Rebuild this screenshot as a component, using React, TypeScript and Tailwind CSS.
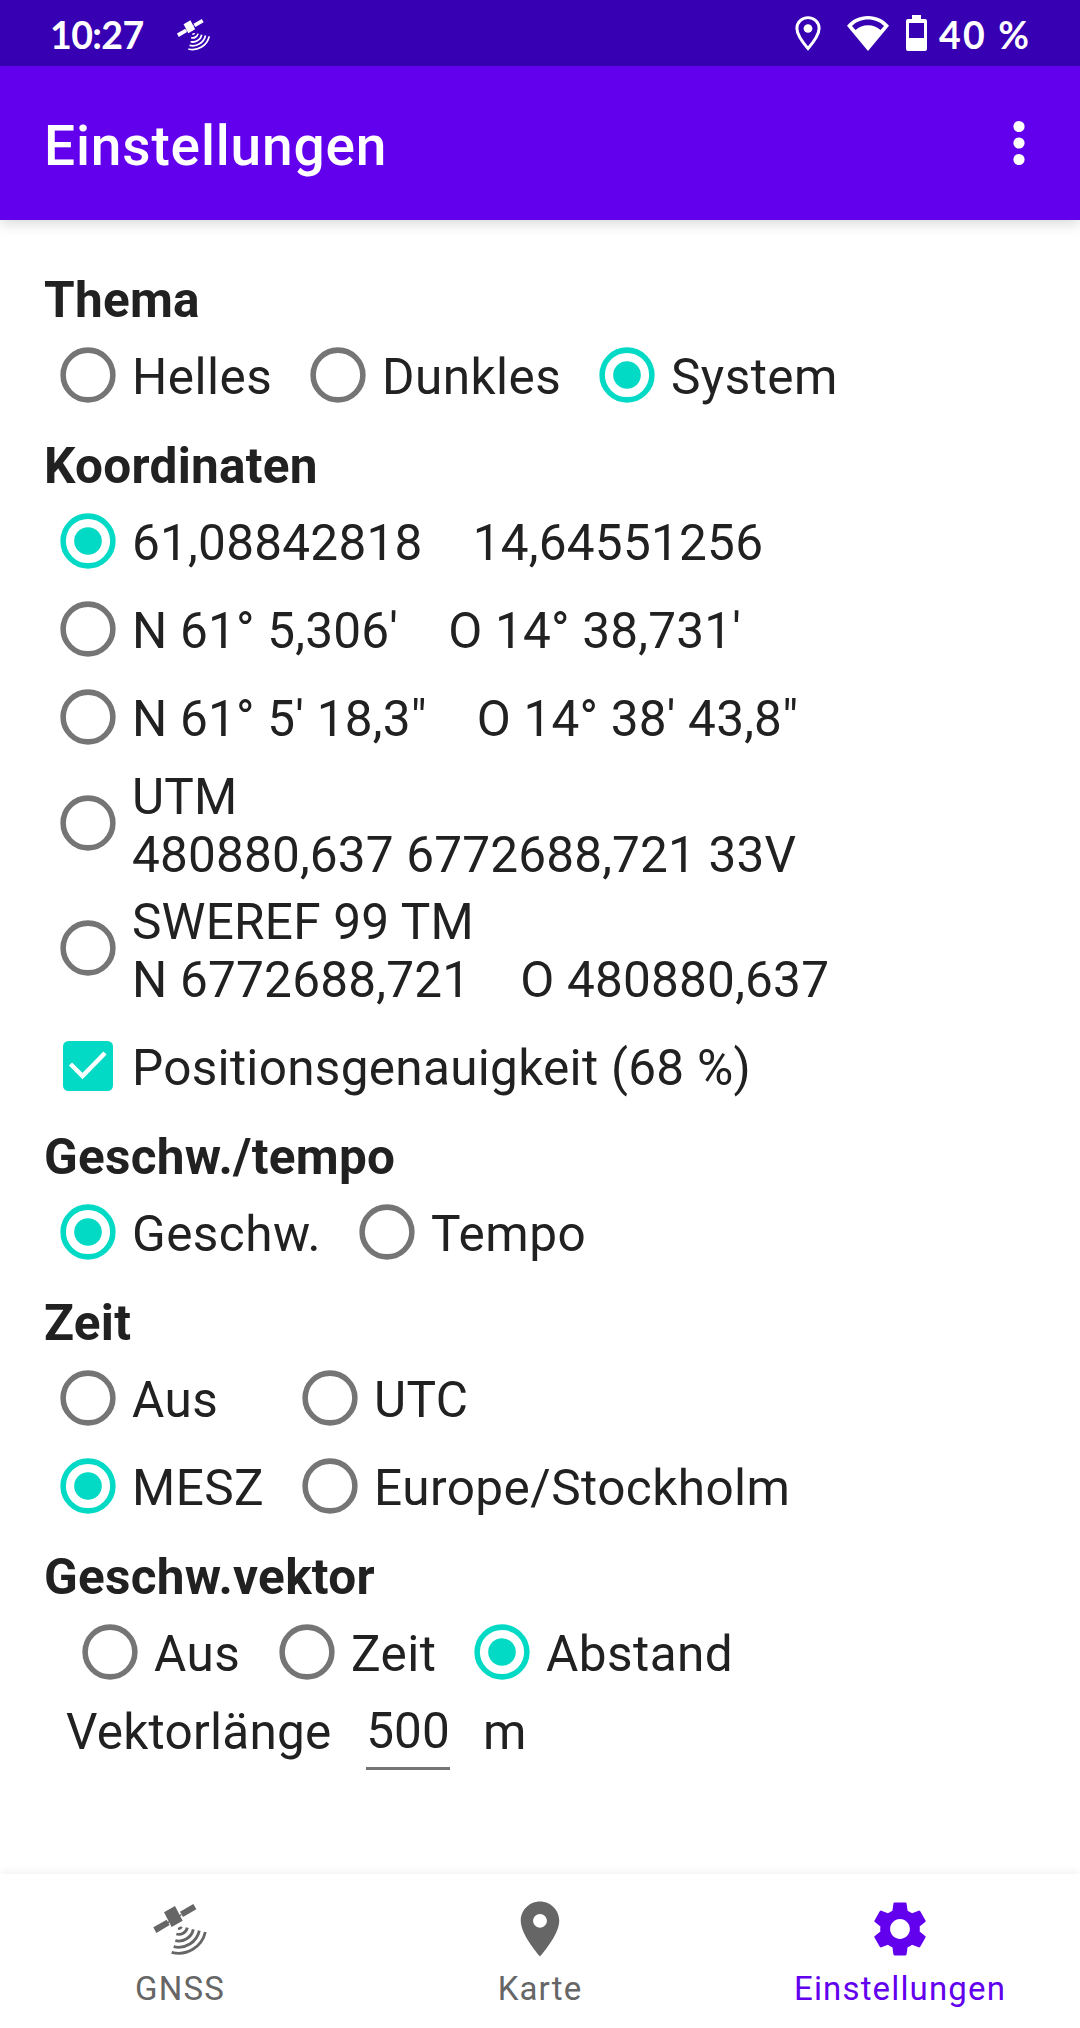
import type { ReactNode } from "react";

function Satellite({ className }: { className: string }) {
  return (
    <svg viewBox="81 48 198 198" className={className} fill="currentColor">
      <path d="M132 97 165 78 188 122 155 141Z" />
      <path d="M100 142 140 119 149 135 109 159Z" />
      <path d="M180 95 220 72 229 88 189 111Z" />
      <path d="M138 131 184 104" stroke="currentColor" strokeWidth="4" />
      <path d="M173 145Q180 136 188 141 186 149 175 150Z" />
      <g fill="none" stroke="currentColor" strokeWidth="8.5">
        <path d="M169 162A26 26 0 0 0 202 143" />
        <path d="M166 182A45 45 0 0 0 220 148" />
        <path d="M161 200A63.5 63.5 0 0 0 238 152" />
        <path d="M155 217A82 82 0 0 0 256 156" />
      </g>
    </svg>
  );
}

function Radio({
  label,
  checked = false,
  className = "",
  box = "h-[88px]",
  spacing = "tracking-[0.45px]",
}: {
  label: ReactNode;
  checked?: boolean;
  className?: string;
  box?: string;
  spacing?: string;
}) {
  return (
    <div role="radio" aria-checked={checked} className={`flex shrink-0 items-center ${box} ${className}`}>
      <span className="flex w-[88px] shrink-0 justify-center pt-px">
        <svg
          viewBox="-0.13 -0.13 20.26 20.26"
          className={`size-[56px] ${checked ? "text-[#03dac5]" : "text-[#757575]"}`}
        >
          <circle cx="10" cy="10" r="9" fill="none" stroke="currentColor" strokeWidth="2" />
          {checked && <circle cx="10" cy="10" r="5" fill="currentColor" />}
        </svg>
      </span>
      <span className={`mt-[6px] whitespace-pre ${spacing}`}>{label}</span>
    </div>
  );
}

function Heading({ children }: { children: string }) {
  return (
    <h2 className="mt-[19px] h-[59px] pl-[44px] font-bold leading-[58px] tracking-[0.28px]">{children}</h2>
  );
}

function NavItem({ label, icon, active = false }: { label: string; icon: ReactNode; active?: boolean }) {
  return (
    <div
      className={`flex flex-1 flex-col items-center pt-[22px] ${active ? "text-[#6200ee]" : "text-[#666666]"}`}
    >
      {icon}
      <span className="mt-[7px] text-[33px] leading-[39px] tracking-[1.15px]">{label}</span>
    </div>
  );
}

export default function App() {
  return (
    <div className="flex h-[2028px] w-[1080px] flex-col overflow-hidden bg-white font-['Roboto',sans-serif] text-[49.5px] leading-[58px] text-[#212121]">
      <div className="flex h-[66px] shrink-0 items-center bg-[#3700b3] pr-[48px] pl-[50px] font-['Lato',sans-serif] text-[37.5px] leading-[66px] font-bold text-white">
        <span className="mt-[4px] w-[123px] tracking-[-0.6px]">10:27</span>
        <Satellite className="mt-[2px] size-[41px]" />
        <div className="ml-auto flex items-center">
          <svg viewBox="0 0 26 36" className="h-[35px] w-[26px]" preserveAspectRatio="none">
            <path
              d="M13 1.7C6.7 1.7 1.9 6.6 1.9 12.8 1.9 19.8 8 27.4 13 33.5 18 27.4 24.1 19.8 24.1 12.8 24.1 6.6 19.3 1.7 13 1.7Z"
              fill="none"
              stroke="white"
              strokeWidth="3"
            />
            <circle cx="13" cy="12.8" r="4.4" fill="white" />
          </svg>
          <svg
            viewBox="0 0 42 36"
            className="ml-[26px] h-[35px] w-[42px]"
            preserveAspectRatio="none"
            fill="white"
          >
            <path
              fillRule="evenodd"
              d="M0 10C5.5 3.5 12.5 0 21 0S36.500 3.500 42 10L21 36ZM5 10.200 8.500 14.500C12 11.200 16 9.400 21 9.400S30 11.200 33.500 14.500L37 10.200C32.500 6 27.500 3.700 21 3.700S9.500 6 5 10.200Z"
            />
          </svg>
          <svg viewBox="0 0 21 36" className="ml-[17px] h-[36px] w-[21px]" fill="white">
            <path
              fillRule="evenodd"
              d="M6 0H15V4H19Q21 4 21 6V34Q21 36 19 36H2Q0 36 0 34V6Q0 4 2 4H6ZM3 8V23H18V8Z"
            />
          </svg>
          <span className="mt-[4px] ml-[12px] w-[93px] whitespace-pre tracking-[2.2px]">40 %</span>
        </div>
      </div>

      <header className="relative z-10 flex h-[154px] shrink-0 items-center justify-between bg-[#6200ee] pr-[55px] pl-[44px] text-white shadow-[0_4px_12px_rgba(0,0,0,0.15)]">
        <h1 className="mt-[6px] text-[55px] font-medium leading-[64px] tracking-[0.85px]">Einstellungen</h1>
        <svg viewBox="0 0 12 46" className="h-[46px] w-[12px]" fill="white">
          <circle cx="6" cy="6.5" r="5.6" />
          <circle cx="6" cy="23" r="5.6" />
          <circle cx="6" cy="39.5" r="5.6" />
        </svg>
      </header>

      <main className="flex-1 pt-[32px]">
        <Heading>Thema</Heading>
        <div className="flex pl-[44px]">
          <Radio label="Helles" className="w-[250px]" />
          <Radio label="Dunkles" className="w-[289px]" />
          <Radio label="System" checked />
        </div>

        <Heading>Koordinaten</Heading>
        <div className="flex flex-col pl-[44px]">
          <Radio spacing="tracking-[0.24px]" label={"61,08842818    14,64551256"} checked />
          <Radio spacing="tracking-[0.21px]" label={"N 61° 5,306'    O 14° 38,731'"} />
          <Radio spacing="tracking-[0.21px]" label={"N 61° 5' 18,3\"    O 14° 38' 43,8\""} />
          <Radio
            spacing="tracking-[0.17px]"
            box="h-[125px]"
            label={"UTM\n480880,637 6772688,721 33V"}
          />
          <Radio
            spacing="tracking-[0.21px]"
            box="h-[125px]"
            label={"SWEREF 99 TM\nN 6772688,721    O 480880,637"}
          />
          <div role="checkbox" aria-checked className="mt-[11px] flex h-[88px] items-center">
            <span className="flex w-[88px] shrink-0 justify-center pt-[2px]">
              <svg viewBox="0 0 50 50" className="size-[50px]">
                <rect width="50" height="50" rx="5.500" fill="#03dac5" />
                <path d="M7.500 23 19.500 35 42 12" fill="none" stroke="white" strokeWidth="4.500" />
              </svg>
            </span>
            <span className="mt-[6px] whitespace-pre tracking-[0.29px]">Positionsgenauigkeit (68 %)</span>
          </div>
        </div>

        <Heading>Geschw./tempo</Heading>
        <div className="flex pl-[44px]">
          <Radio label="Geschw." checked className="w-[299px]" />
          <Radio label="Tempo" />
        </div>

        <Heading>Zeit</Heading>
        <div className="grid grid-cols-[242px_1fr] pl-[44px]">
          <Radio label="Aus" />
          <Radio label="UTC" />
          <Radio label="MESZ" checked />
          <Radio label="Europe/Stockholm" />
        </div>

        <Heading>Geschw.vektor</Heading>
        <div className="flex pl-[66px]">
          <Radio label="Aus" className="w-[197px]" />
          <Radio label="Zeit" className="w-[195px]" />
          <Radio label="Abstand" checked />
        </div>
        <div className="flex items-start pt-[8px] pl-[66px]">
          <span className="w-[300px] tracking-[0.24px]">Vektorlänge</span>
          <span className="-mt-px h-[68px] w-[84px] border-b-[3px] border-[#757575] text-center">500</span>
          <span className="ml-[33px]">m</span>
        </div>
      </main>

      <nav className="flex h-[154px] shrink-0 bg-white shadow-[0_-2px_8px_rgba(0,0,0,0.06)]">
        <NavItem label="GNSS" icon={<Satellite className="size-[66px]" />} />
        <NavItem
          label="Karte"
          icon={
            <svg viewBox="0 0 24 24" className="size-[66px]" fill="currentColor">
              <path d="M12 2C8.130 2 5 5.130 5 9c0 5.250 7 13 7 13s7-7.750 7-13c0-3.870-3.130-7-7-7zm0 9.500c-1.380 0-2.500-1.120-2.500-2.500s1.120-2.500 2.500-2.500 2.500 1.120 2.500 2.500-1.120 2.500-2.500 2.500z" />
            </svg>
          }
        />
        <NavItem
          active
          label="Einstellungen"
          icon={
            <svg viewBox="0 0 24 24" className="size-[66px]" fill="currentColor">
              <path d="M19.140 12.940c.040-.300.060-.610.060-.940 0-.320-.020-.640-.070-.940l2.030-1.580c.180-.140.230-.410.120-.610l-1.920-3.320c-.120-.220-.370-.290-.590-.220l-2.390.960c-.500-.380-1.030-.700-1.620-.940l-.360-2.540c-.040-.240-.240-.410-.480-.410h-3.840c-.240 0-.430.170-.470.410l-.360 2.540c-.590.240-1.130.570-1.620.940l-2.390-.960c-.220-.080-.470 0-.590.220L2.740 8.870c-.120.210-.080.470.120.610l2.030 1.580c-.050.300-.090.630-.090.940s.020.640.070.940l-2.030 1.580c-.180.140-.230.410-.120.610l1.920 3.320c.120.220.370.290.590.220l2.390-.960c.500.380 1.030.700 1.620.940l.360 2.540c.050.240.240.410.480.410h3.840c.240 0 .440-.170.470-.410l.360-2.540c.590-.240 1.130-.560 1.620-.940l2.390.960c.220.080.470 0 .590-.220l1.920-3.320c.120-.220.070-.470-.120-.610l-2.010-1.580zM12 15.600c-1.980 0-3.600-1.620-3.600-3.600s1.620-3.600 3.600-3.600 3.600 1.620 3.600 3.600-1.620 3.600-3.600 3.600z" />
            </svg>
          }
        />
      </nav>
    </div>
  );
}
